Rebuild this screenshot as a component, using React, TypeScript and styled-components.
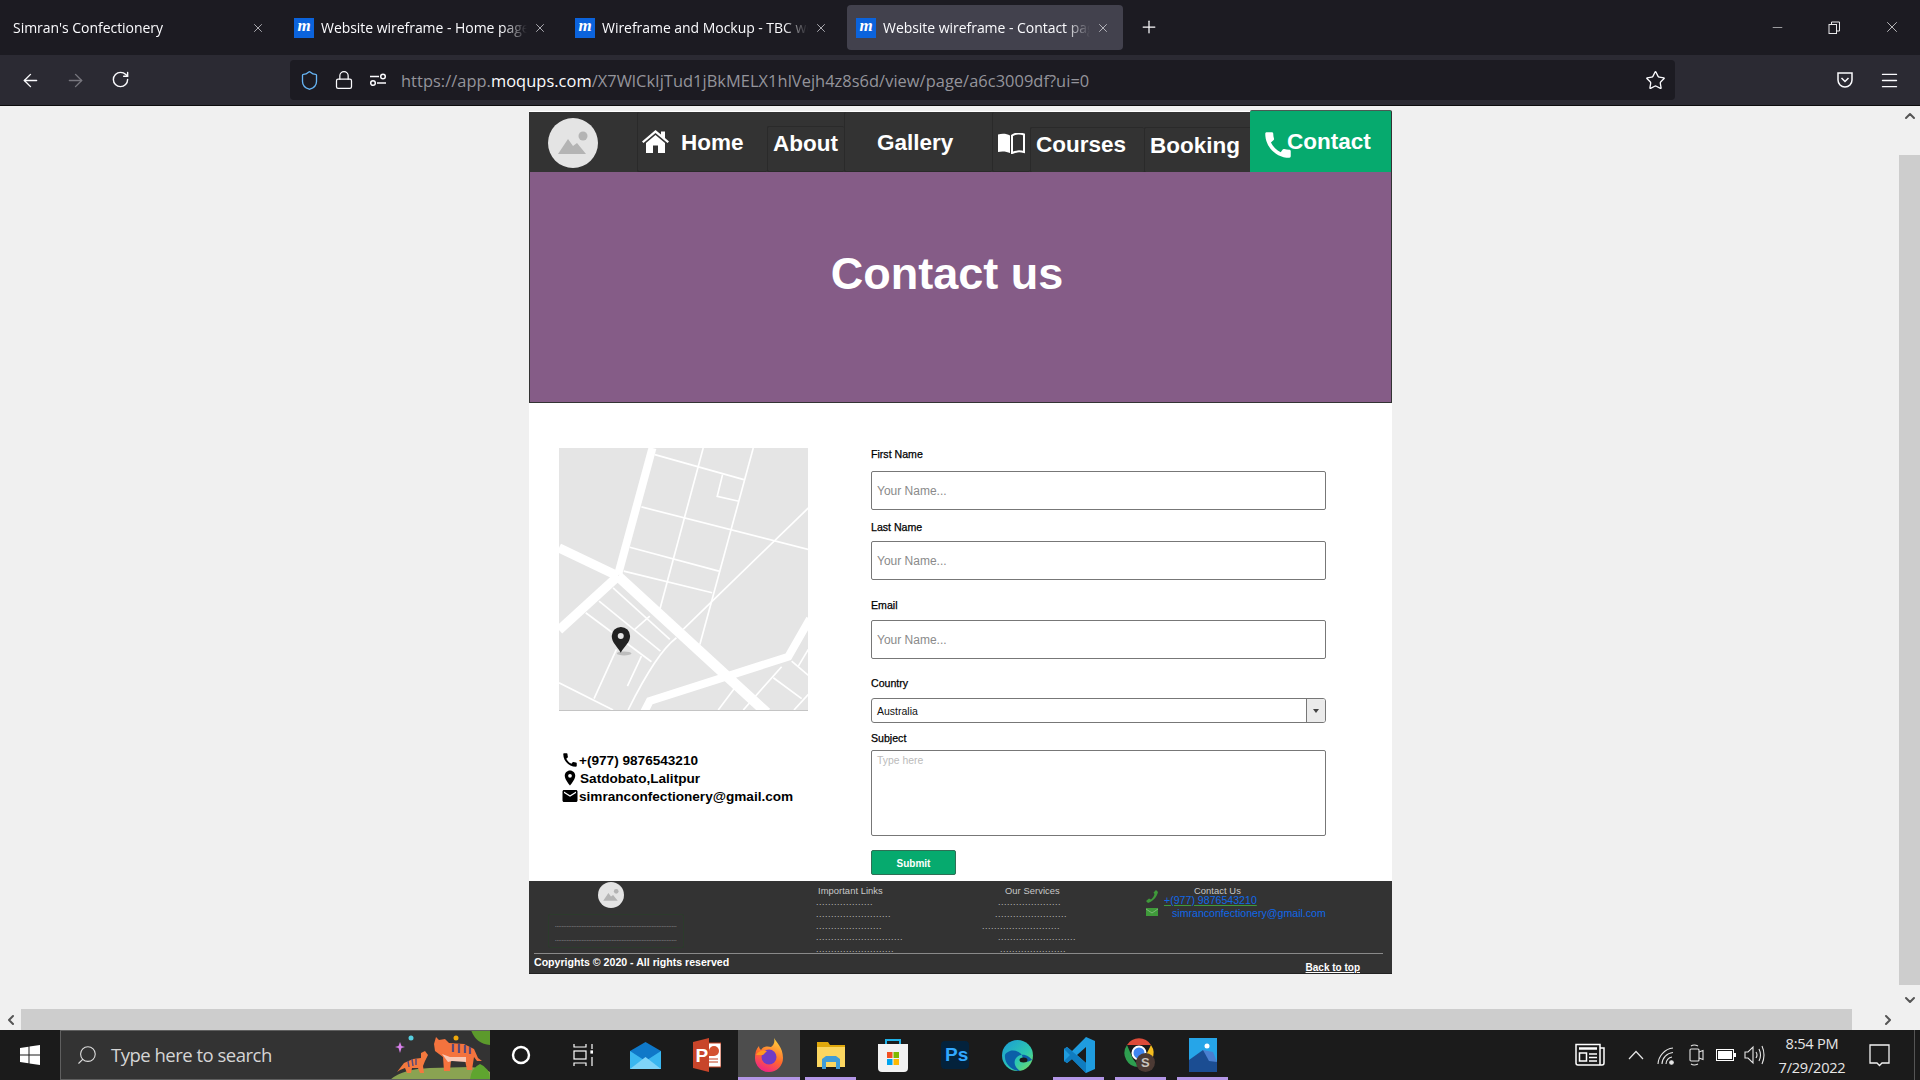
import React from "react";
import styled, { createGlobalStyle } from "styled-components";
import { ArrowLeft, ArrowRight, RotateCw, Lock, Star, Menu, Plus, X, Minus, ChevronUp, ChevronLeft, ChevronRight, ChevronDown, Search, Shield } from "lucide-react";
import { MdCall, MdLocationOn, MdEmail } from "react-icons/md";

const Global = createGlobalStyle`
  html, body { margin: 0; padding: 0; width: 1920px; height: 1080px; overflow: hidden; background: #f0f0f0; }
  * { box-sizing: border-box; }
`;

const Screen = styled.div`
  width: 1920px; height: 1080px; display: flex; flex-direction: column; overflow: hidden;
  font-family: "Liberation Sans", Arial, sans-serif;
`;

/* ---------- browser chrome ---------- */
const TabBar = styled.div`
  height: 55px; flex: none; background: #1c1b22; display: flex; align-items: flex-start; padding-top: 5px;
  font-family: "Open Sans", "Noto Sans", sans-serif; color: #fbfbfe;
`;
const TabStrip = styled.div`display: flex; gap: 7px; margin-left: -2px;`;
const Tab = styled.div<{ $active?: boolean; $pl?: number; $pr?: number }>`
  width: 276px; height: 45px; border-radius: 4px; display: flex; align-items: center; padding: 0 ${p => p.$pr ?? 12}px 0 ${p => p.$pl ?? 13}px;
  background: ${p => (p.$active ? "#42414d" : "transparent")};
`;
const TabFavicon = styled.span`
  width: 20px; height: 20px; flex: none; background: #0b63dc; color: #fff; margin-right: 7px;
  display: flex; align-items: center; justify-content: center;
  font: italic 700 17px/20px "Liberation Serif", serif; padding-bottom: 3px;
`;
const TabTitle = styled.span<{ $plain?: boolean }>`
  flex: 1; white-space: nowrap; overflow: hidden; font-size: 14px; letter-spacing: -0.04px; margin-left: ${p => (p.$plain ? "2px" : "0")};
  mask-image: linear-gradient(to right, #000 88%, transparent 100%);
`;
const TabClose = styled.span`flex: none; width: 14px; height: 14px; display: flex; color: #d8d8dc; margin-left: 6px;`;
const NewTab = styled.span`display: flex; color: #fbfbfe; margin: 12px 0 0 16px;`;
const WindowControls = styled.div`margin-left: auto; display: flex; height: 44px; align-items: center; padding-right: 0; color: #e8e8ea;`;
const WindowButton = styled.span`width: 57px; display: flex; justify-content: center;`;

const Toolbar = styled.div`
  height: 51px; flex: none; background: #2b2a33; border-bottom: 1px solid #0c0c0d; display: flex; align-items: center; color: #fbfbfe;
`;
const NavButton = styled.span<{ $dim?: boolean }>`
  width: 45px; flex: none; display: flex; justify-content: center; color: ${p => (p.$dim ? "#77767e" : "#fbfbfe")};
`;
const NavButtons = styled.div`display: flex; margin-left: 8px; width: 282px;`;
const AddressBar = styled.div`
  width: 1385px; height: 40px; background: #1c1b22; border-radius: 4px; display: flex; align-items: center; padding-left: 3px;
`;
const AddrIcon = styled.span`width: 35px; flex: none; display: flex; justify-content: center; margin-left: -1px;`;
const Url = styled.span`
  font: 16.4px "Open Sans", "Noto Sans", sans-serif; color: #94949b; white-space: nowrap; margin-left: 6px; letter-spacing: 0.05px;
  b { color: #fbfbfe; font-weight: 400; }
`;
const StarSlot = styled.span`margin-left: auto; margin-right: 9px; display: flex;`;
const ToolRight = styled.div`display: flex; margin-left: 158px; gap: 20px; align-items: center;`;
const ToolIcon = styled.span`display: flex; width: 24px; justify-content: center;`;

/* ---------- viewport ---------- */
const Viewport = styled.div`flex: 1; display: flex; min-height: 0; background: #f0f0f0;`;
const PageArea = styled.div`flex: 1; padding: 5px 0 0 529px;`;
const VScroll = styled.div`width: 21px; flex: none; display: flex; flex-direction: column; align-items: center; color: #555;`;
const VThumb = styled.div`width: 21px; height: 832px; background: #cdcdcd; margin: 30px 0 6px;`;
const ArrowSlot = styled.span<{ $mt?: number }>`display: flex; height: 18px; align-items: center; margin-top: ${p => p.$mt ?? 0}px;`;
const HScroll = styled.div`height: 21px; flex: none; background: #f0f0f0; display: flex; align-items: center; color: #555;`;
const HThumb = styled.div`width: 1831px; height: 21px; background: #cdcdcd;`;
const HArrow = styled.span`width: 21px; display: flex; justify-content: center;`;
const HEnd = styled.span`width: 68px; padding-left: 28px; display: flex;`;

/* ---------- the page ---------- */
const Card = styled.div`width: 863px; background: #fff; display: flex; flex-direction: column;`;
const NavBar = styled.nav`
  height: 60px; margin-top: 1px; background: #333; display: flex; color: #fff; font-weight: 700; font-size: 22.5px; line-height: 30px;
`;
const NavCell = styled.div<{ $w: number; $top?: number; $pl?: number; $pt?: number }>`
  width: ${p => p.$w}px; height: ${p => 60 - (p.$top ?? 0) + ((p.$top ?? 0) > 14 ? 1 : 0)}px; margin-top: ${p => p.$top ?? 0}px;
  padding: ${p => p.$pt ?? 16}px 0 0 ${p => p.$pl ?? 0}px; flex: none; display: flex; align-items: flex-start; white-space: nowrap;
  border-left: 1px solid #2a2a2a; border-top: ${p => (p.$top ? "1px solid #2a2a2a" : "0")}; border-bottom: 1px solid #2a2a2a; border-radius: 2px;
`;
const LogoCell = styled.div`width: 108px; flex: none; padding: 6px 0 0 19px;`;
const Logo = styled.svg<{ $size: number }>`width: ${p => p.$size}px; height: ${p => p.$size}px; display: block;`;
const HomeIconSlot = styled.span`display: flex; width: 39px; padding-top: 2px;`;
const BookSlot = styled.span`display: flex; padding-top: 5px;`;
const ContactCell = styled.div`
  width: 142px; height: 62px; margin: -2px 0 0 -9px; flex: none; position: relative; z-index: 1; background: #06aa6e; border-top: 1px solid #4a5a54;
  border-right: 1px solid #333; border-radius: 2px 2px 0 0; display: flex; align-items: flex-start; padding: 16px 0 0 11px;
`;
const CallSlot = styled.span`
  display: flex; flex: none; width: 26px; height: 30px; padding-top: 1px;
  svg { flex: none; }
`;

const Hero = styled.header`
  height: 231px; background: #855c87; border: 1px solid #333; border-top: 0; display: flex; align-items: center; justify-content: center;
  padding: 0 27px 26px 0;
`;
const HeroTitle = styled.h1`margin: 0; color: #fff; font-size: 45px; line-height: 52px; font-weight: 700;`;

const Body = styled.main`height: 478px; display: flex; padding: 45px 0 0 30px; background: #fff;`;
const LeftCol = styled.section`width: 249px; flex: none;`;
const MapFrame = styled.svg`display: block; width: 249px; height: 263px; background: #e5e5e5; border-bottom: 1px solid #c4c4c4;`;
const ContactList = styled.ul`list-style: none; margin: 40px 0 0; padding: 0 0 0 2px;`;
const ContactLine = styled.li<{ $pl: number }>`
  display: flex; align-items: center; height: 18px; font-size: 13.6px; font-weight: 700; color: #000; white-space: nowrap;
  span { display: flex; width: ${p => p.$pl}px; flex: none; }
`;

const FormCol = styled.form`width: 455px; margin-left: 63px; flex: none;`;
const Field = styled.div<{ $top?: number; $gap: number }>`
  margin-top: ${p => p.$top ?? 0}px;
  label {
    display: block; font-size: 10.6px; line-height: 12px; font-weight: 400; color: #000; margin-bottom: ${p => p.$gap}px;
    -webkit-text-stroke: 0.25px #000;
  }
`;
const TextInput = styled.input`
  display: block; width: 455px; height: 39px; border: 1px solid #777; border-radius: 2px; padding: 0 5px; margin: 0;
  font: 12px "Liberation Sans", Arial, sans-serif; background: #fff;
  &::placeholder { color: #8a8a8a; opacity: 1; }
`;
const SelectBox = styled.div`
  width: 455px; height: 25px; border: 1px solid #777; border-radius: 3px; display: flex; align-items: center; padding-left: 5px;
  font-size: 10.5px; color: #111; overflow: hidden;
`;
const SelectValue = styled.span`flex: 1;`;
const SelectArrow = styled.span`
  width: 19px; height: 25px; background: #ebebeb; border-left: 1px solid #777; display: flex; align-items: center; justify-content: center;
  &::after { content: ""; border: 3.5px solid transparent; border-top: 4px solid #444; margin-top: 4px; }
`;
const TextArea = styled.textarea`
  display: block; width: 455px; height: 86px; border: 1px solid #777; border-radius: 2px; padding: 4px 5px; margin: 0; resize: none;
  font: 10.4px "Liberation Sans", Arial, sans-serif; background: #fff;
  &::placeholder { color: #bbb; opacity: 1; }
`;
const SubmitButton = styled.button`
  display: block; width: 85px; height: 25px; margin: 14px 0 0; padding: 1px 0 0; background: #06aa6e; color: #fff; border: 1px solid #2f6f55; border-radius: 2px;
  font: 700 10px "Liberation Sans", Arial, sans-serif;
`;

const Footer = styled.footer`height: 93px; background: #333; border-bottom: 1px solid #222; display: flex; flex-direction: column; color: #c8c8c8;`;
const FooterTop = styled.div`height: 72px; flex: none; display: flex; overflow: hidden; font-size: 9px; line-height: 12px;`;
const Brand = styled.div`width: 287px; flex: none; padding: 1px 0 0 19px;`;
const BrandLogo = styled.div`margin-left: 50px;`;
const DashBox = styled.div`
  width: 136px; height: 34px; margin-top: 6px; border: 1px solid #2c3b2c; border-radius: 2px; padding: 3px 0 0 6px; line-height: 14px;
  color: #d8d8d8; overflow: hidden; white-space: nowrap;
`;
const DashLine = styled.div`height: 14px; font-size: 6px;`;
const FooterCol = styled.div<{ $w: number }>`width: ${p => p.$w}px; flex: none; padding-top: 4px; white-space: nowrap;`;
const ColTitle = styled.div<{ $ml: number }>`margin-left: ${p => p.$ml}px; font-size: 9.4px; height: 12px; letter-spacing: 0.05px;`;
const DotRow = styled.div<{ $ml: number }>`margin-left: ${p => p.$ml}px; height: 11.8px; letter-spacing: 0.5px; color: #bdbdbd; position: relative; top: -1px;`;
const ContactFoot = styled.div`flex: 1; display: flex; padding-top: 4px; white-space: nowrap;`;
const FootIcons = styled.div`width: 23px; flex: none; padding: 5px 0 0 5px; display: flex; flex-direction: column; gap: 5px;`;
const FootLink = styled.a<{ $ml: number; $line?: boolean; $up?: number }>`
  display: block; margin: ${p => p.$up ?? 0}px 0 0 ${p => p.$ml}px; font-size: 10.6px; line-height: 11px; color: #1068e8; text-decoration: ${p => (p.$line ? "underline" : "none")};
  text-decoration-color: #3f9a3a;
`;
const Rule = styled.div`height: 1px; width: 849px; margin-left: 5px; background: #8a8a8a; flex: none;`;
const FooterBottom = styled.div`flex: 1; display: flex; justify-content: space-between; padding: 1px 32px 0 5px; color: #fff; font-weight: 700;`;
const Copyright = styled.span`font-size: 10.6px; line-height: 14px;`;
const BackTop = styled.a`font-size: 10px; line-height: 14px; margin-top: 6px; text-decoration: underline; color: #fff;`;

/* ---------- taskbar ---------- */
const Taskbar = styled.div`height: 50px; flex: none; background: #1b1b1b; display: flex; color: #fff;`;
const StartCell = styled.div`width: 60px; flex: none; display: flex; justify-content: center; align-items: center; padding-right: 0;`;
const SearchBox = styled.div`
  width: 430px; flex: none; background: #333; border: 1px solid #5f5f5f; border-width: 1px 0 1px 1px; display: flex; align-items: center; padding-left: 15px;
  overflow: hidden; position: relative; color: #ddd;
`;
const SearchText = styled.span`font: 18.5px "Open Sans", "Noto Sans", sans-serif; margin: -2px 0 0 13px; letter-spacing: -0.5px; color: #d5d5d5;`;
const TigerArt = styled.svg`margin-left: auto; width: 100px; height: 50px; flex: none;`;
const TaskCell = styled.div<{ $active?: boolean; $open?: boolean }>`
  width: 62px; flex: none; position: relative; display: flex; align-items: center; justify-content: center;
  background: ${p => (p.$active ? "#4d4d4d" : "transparent")};
  &::after {
    content: ""; position: absolute; bottom: 0; left: ${p => (p.$active ? "0" : "5px")}; right: ${p => (p.$active ? "0" : "6px")}; height: 3px;
    background: ${p => (p.$open || p.$active ? "#b396e6" : "transparent")};
  }
`;
const Tray = styled.div`margin: 0 5px 0 auto; display: flex; align-items: center; padding-right: 10px; border-right: 1px solid #555;`;
const TrayIcon = styled.span<{ $w: number; $mr?: number }>`width: ${p => p.$w}px; margin-right: ${p => p.$mr ?? 0}px; display: flex; justify-content: center; flex: none;`;
const Clock = styled.div`
  width: 84px; text-align: center; font: 14.6px/24px "Open Sans", "Noto Sans", sans-serif; color: #e6e6e6; letter-spacing: -0.25px; white-space: nowrap;
`;
const StoreSquares = styled.svg`display: block;`;
const ChromeBadge = styled.text`font: 700 13px "Liberation Sans", Arial, sans-serif; fill: #c9c2be;`;
const TileText = styled.text`font: 700 19px "Liberation Sans", Arial, sans-serif;`;

/* ---------- drawings ---------- */
const PlaceholderLogo = ({ size }: { size: number }) => (
  <Logo $size={size} viewBox="0 0 50 50">
    <circle cx="25" cy="25" r="25" fill="#e4e4e4" />
    <path d="M10 36 L20 21 L25 28 L29 25 L38 36 Z" fill="#b4b4b4" />
    <circle cx="35" cy="18" r="4.5" fill="#b4b4b4" />
  </Logo>
);

const thick = [
  ["M338 55 L235 435", 24],
  ["M58 355 L235 440", 28],
  ["M235 440 L58 602", 28],
  ["M235 440 L680 850", 31],
  ["M810 568 L745 682 L330 815 L312 850", 24],
] as const;
const thin = [
  "M345 75 L612 150", "M490 55 L360 540", "M640 55 L480 645", "M548 135 L532 200 L597 215", "M305 232 L805 360", "M805 235 L430 600",
  "M270 353 L537 425", "M252 425 L517 490", "M220 475 L390 630", "M178 515 L362 665", "M138 550 L335 697", "M330 560 L285 600",
  "M410 625 Q350 670 265 842", "M230 660 L163 808", "M58 760 L220 842", "M305 680 L263 770", "M585 775 L535 842", "M725 712 L610 842",
  "M755 695 L805 738", "M700 745 L785 808", "M805 795 L762 842", "M805 660 L775 710",
];

const MapDrawing = () => (
  <MapFrame viewBox="58 55 746 787" preserveAspectRatio="none">
    {thick.map(([d, w]) => <path key={d} d={d} stroke="#fff" strokeWidth={w} fill="none" />)}
    {thin.map(d => <path key={d} d={d} stroke="#fff" strokeWidth="5" fill="none" />)}
    <ellipse cx="253" cy="672" rx="22" ry="6" fill="#bdbdbd" />
    <path d="M243 670 C232 650 216 640 216 620 A27.500 27.500 0 0 1 271 620 C271 640 254 650 243 670 Z" fill="#222" />
    <circle cx="243" cy="620" r="9" fill="#e5e5e5" />
  </MapFrame>
);

const HomeIcon = () => (
  <svg width="27" height="23" viewBox="0 0 27 23" fill="#fff">
    <path d="M13.500 0 L19 4.500 V1.500 H23 V8 L27 11.500 L25.500 13 L13.500 3 L1.500 13 L0 11.500 Z" />
    <path d="M13.500 5 L23 13 V23 H16 V15.500 H11 V23 H4 V13 Z" />
  </svg>
);
const BookIcon = () => (
  <svg width="28" height="21" viewBox="0 0 28 21">
    <path d="M1 1.500 C5 0 10 0.500 13 2.500 V20 C10 18.500 5 18 1 19 Z" fill="#fff" />
    <path d="M15 2.500 C18 0.500 23 0 27 1.500 V19 C23 18 18 18.500 15 20 Z" fill="#333" stroke="#fff" strokeWidth="2" />
  </svg>
);
const Moq = () => <TabFavicon>m</TabFavicon>;
const CloseX = () => <TabClose><X size={14} strokeWidth={1.3} /></TabClose>;

const RestoreIcon = () => (
  <svg width="13" height="13" viewBox="0 0 13 13" fill="none" stroke="#e8e8ea">
    <rect x="1" y="3.500" width="7.500" height="9" /><path d="M3.500 3.500 V1 H11.500 V10 H8.500" />
  </svg>
);
const SettingsIcon = () => (
  <svg width="18" height="16" viewBox="0 0 18 16" fill="none" stroke="#fbfbfe" strokeWidth="1.500">
    <path d="M1 4.500 H10" /><circle cx="14" cy="4.500" r="2.300" /><path d="M8 11 H17" /><circle cx="4" cy="11" r="2.300" />
  </svg>
);
const PocketIcon = () => (
  <svg width="18" height="18" viewBox="0 0 18 18" fill="none" stroke="#fbfbfe" strokeWidth="1.500">
    <path d="M2 2 H16 V9 A7 7 0 0 1 2 9 Z" /><path d="M5.500 7 L9 10.500 L12.500 7" />
  </svg>
);
const WinLogo = () => (
  <svg width="20" height="20" viewBox="0 0 20 20" fill="#fff">
    <path d="M0 3 L8.500 1.700 V9.500 H0 Z M9.500 1.500 L20 0 V9.500 H9.500 Z M0 10.500 H8.500 V18.300 L0 17 Z M9.500 10.500 H20 V20 L9.500 18.500 Z" />
  </svg>
);
const Tiger = () => (
  <TigerArt viewBox="0 0 100 50">
    <rect width="100" height="50" fill="#333" />
    <path d="M0 50 Q12 39 40 38 L80 37 Q95 38 100 42 V50 Z" fill="#8aa352" />
    <path d="M81 0 L100 0 V15 Q86 14 81 0 Z" fill="#5c9a2c" />
    <path d="M80 50 Q81 38 90 34 Q100 38 100 50 Z" fill="#5fa52f" />
    <circle cx="21" cy="8" r="2.500" fill="#56cfe0" />
    <circle cx="66" cy="8" r="2.500" fill="#f0a90c" />
    <path d="M10 12 L11.500 16 L15 17 L11.500 18 L10 23 L8.500 18 L5 17 L8.500 16 Z" fill="#d880ea" />
    <path d="M44 14 L46 7 L49 10 L55 9 L59 13 L74 14 L84 19 L88 28 L92 31 L87 31 L84 27 L82 40 L77 40 L75 30 L61 30 L60 41 L54 41 L53 27 L49 24 L45 21 Z" fill="#f4733e" />
    <path d="M52 24 L60 27 L76 27 L76 32 L62 31 L58 32 Z" fill="#f8c8b6" />
    <path d="M63 14 L63 22 M69 14 L69 23 M75 15 L75 23 M80 17 L80 24" stroke="#5a4a78" strokeWidth="2.200" />
    <path d="M7 42 L14 33 L23 29 L31 28 L31 23 L35 21 L38 25 L35 31 L33 36 L34 43 L30 43 L28 38 L22 38 L21 43 L17 43 L15 38 L10 40 Z" fill="#f4793e" />
    <path d="M18 31 L19 37 M22 29 L23 36 M26 29 L26 35" stroke="#5a4a78" strokeWidth="1.500" />
  </TigerArt>
);
const MailIcon = () => (
  <svg width="31" height="27" viewBox="0 0 31 27">
    <path d="M0 9 L15.500 0 L31 9 V27 H0 Z" fill="#0f78c8" />
    <path d="M0 9 L15.500 19 L31 9 V27 H0 Z" fill="#3ab7f0" />
    <path d="M0 27 L15.500 15 L31 27 Z" fill="#7fd4f8" />
  </svg>
);
const PptIcon = () => (
  <svg width="28" height="34" viewBox="0 0 28 34">
    <rect x="10" y="5" width="18" height="24" fill="#fff" stroke="#c43e1c" />
    <path d="M16 13 A5 5 0 1 1 21 18 H16 Z" fill="#d35230" />
    <path d="M16 21 H25 M16 24 H25" stroke="#c43e1c" />
    <path d="M0 4 L16 0 V34 L0 30 Z" fill="#c8452a" />
    <TileText x="2.500" y="24" fill="#fff">P</TileText>
  </svg>
);
const FirefoxIcon = () => (
  <svg width="30" height="34" viewBox="0 0 30 34">
    <defs>
      <linearGradient id="ff" x1="0.700" y1="0" x2="0.300" y2="1"><stop offset="0" stopColor="#ffd23c" /><stop offset="0.550" stopColor="#ff6a2b" /><stop offset="1" stopColor="#f0208a" /></linearGradient>
    </defs>
    <path d="M20 0 C22 4 29 9 29 20 A14 14 0 0 1 1 20 C1 15 2 11 5 8 C5 10 6 11 7 12 C9 8 14 8 17 9 C20 7 21 4 20 0 Z" fill="url(#ff)" />
    <circle cx="15" cy="19" r="7.500" fill="#6f3cc4" />
    <path d="M2 17 C5 12 10 12 13 13 L9 17 Z" fill="#ff9a1f" />
  </svg>
);
const FolderIcon = () => (
  <svg width="28" height="28" viewBox="0 0 28 28">
    <path d="M0 1 H11 L13 4 H28 V26 H0 Z" fill="#e0a80c" />
    <rect x="0" y="6" width="28" height="20" fill="#fbd660" />
    <path d="M5 28 V18 L9 15 H19 L23 18 V28 H19 V21 H9 V28 Z" fill="#3f9cd8" />
  </svg>
);
const StoreIcon = () => (
  <StoreSquares width="30" height="33" viewBox="0 0 30 33">
    <path d="M8 6 V1 H22 V6" fill="none" stroke="#20b2e8" strokeWidth="2" />
    <path d="M0 5 H30 V29 A4 4 0 0 1 26 33 H4 A4 4 0 0 1 0 29 Z" fill="#f2f2f2" />
    <rect x="9" y="13" width="5.500" height="6" fill="#f25022" /><rect x="15.500" y="13" width="5.500" height="6" fill="#7fba00" />
    <rect x="9" y="20" width="5.500" height="6" fill="#00a4ef" /><rect x="15.500" y="20" width="5.500" height="6" fill="#ffb900" />
  </StoreSquares>
);
const PsIcon = () => (
  <svg width="28" height="28" viewBox="0 0 28 28">
    <rect width="28" height="28" rx="4" fill="#03223c" />
    <TileText x="4" y="20" fill="#31a8ff">Ps</TileText>
  </svg>
);
const EdgeIcon = () => (
  <svg width="31" height="31" viewBox="0 0 31 31">
    <defs>
      <linearGradient id="ed" x1="0" y1="0" x2="1" y2="1"><stop offset="0" stopColor="#1a9ad8" /><stop offset="0.600" stopColor="#2dc8b0" /><stop offset="1" stopColor="#7fe05a" /></linearGradient>
    </defs>
    <circle cx="15.500" cy="15.500" r="15.500" fill="url(#ed)" />
    <path d="M3 15 C2 24 10 31 18 31 C12 27 11 21 15 17 C20 12 28 16 30 20 C24 23 21 22 20 20 C23 14 14 9 8 11 C5 12 3 14 3 15 Z" fill="#0b5fa8" />
    <ellipse cx="21.500" cy="20" rx="4" ry="2.500" fill="#1b1b1b" />
  </svg>
);
const VsCodeIcon = () => (
  <svg width="31" height="36" viewBox="0 0 31 36">
    <path d="M22 0 L31 4 V32 L22 36 L8 22 L3 26 L0 24 V12 L3 10 L8 14 Z M22 10 L13 18 L22 26 Z" fill="#1f9cdf" fillRule="evenodd" />
    <path d="M0 12 L3 10 L22 26 V36 L8 22 L3 26 L0 24 L6 18 Z" fill="#0f7cc0" />
  </svg>
);
const ChromeIcon = () => (
  <svg width="34" height="34" viewBox="0 0 34 34">
    <path d="M3 7 A14 14 0 0 1 27 7 H15 Z" fill="#dd4b39" />
    <path d="M3 7 L9 21 L15 29 A14 14 0 0 1 3 7 Z" fill="#2e9e4f" />
    <path d="M27 7 A14 14 0 0 1 15 29 L21 19 Z" fill="#f5bd1f" />
    <circle cx="15" cy="15" r="6.500" fill="#3f85f0" stroke="#fff" strokeWidth="2" />
    <circle cx="21.500" cy="24.500" r="9.500" fill="#4c3a34" />
    <ChromeBadge x="17" y="29">S</ChromeBadge>
  </svg>
);
const PhotosIcon = () => (
  <svg width="28" height="34" viewBox="0 0 28 34">
    <rect width="28" height="34" fill="#26a5e8" />
    <circle cx="18" cy="8" r="2.500" fill="#fff" />
    <path d="M0 22 L14 12 L28 24 V34 H0 Z" fill="#1b4d92" />
    <path d="M14 12 L24 14 L28 24 L20 23 Z" fill="#4a7fd0" />
  </svg>
);
const NewsIcon = () => (
  <svg width="30" height="24" viewBox="0 0 30 24" fill="none" stroke="#fff" strokeWidth="1.500">
    <path d="M1 1.500 H25 V22 H3 A2 2 0 0 1 1 20 Z M25 5 H29 V20 A2 2 0 0 1 27 22 H25" />
    <path d="M4 5.500 H22" strokeWidth="2.500" /><rect x="4.500" y="10" width="7" height="8" /><path d="M14 11 H22 M14 14.500 H22 M14 18 H22" />
  </svg>
);
const WifiIcon = () => (
  <svg width="18" height="20" viewBox="0 0 18 20" fill="none" stroke="#e6e6e6" strokeWidth="1.100">
    <path d="M1 19 A17 17 0 0 1 16 3" /><path d="M5 19 A12 12 0 0 1 16 7.500" /><path d="M9 19 A7 7 0 0 1 15 12" /><circle cx="14.500" cy="17.500" r="1.800" fill="#e6e6e6" />
  </svg>
);
const MeetIcon = () => (
  <svg width="15" height="24" viewBox="0 0 15 24" fill="none" stroke="#e6e6e6" strokeWidth="1.100">
    <rect x="1" y="6" width="9" height="12" rx="1" /><path d="M10 9 L14 7.500 V16.500 L10 15" /><path d="M2 3 Q5 1 9 3 M2 21 Q5 23 9 21" />
  </svg>
);
const BatteryIcon = () => (
  <svg width="20" height="12" viewBox="0 0 20 12"><rect x="0.500" y="0.500" width="17" height="11" fill="none" stroke="#fff" /><rect x="2" y="2" width="14" height="8" fill="#fff" /><rect x="18" y="4" width="2" height="4" fill="#fff" /></svg>
);
const SpeakerIcon = () => (
  <svg width="22" height="22" viewBox="0 0 22 22" fill="none" stroke="#e6e6e6" strokeWidth="1.100">
    <path d="M1 8 H4 L9 3 V19 L4 14 H1 Z" /><path d="M12 8 Q14 11 12 14 M15 5 Q18 11 15 17 M18 2 Q22 11 18 20" />
  </svg>
);
const TrayChevron = () => (
  <svg width="16" height="10" viewBox="0 0 16 10" fill="none" stroke="#e6e6e6" strokeWidth="1.200"><path d="M1 9 L8 1.500 L15 9" /></svg>
);
const Notify = () => (
  <svg width="21" height="23" viewBox="0 0 21 23" fill="none" stroke="#f2f2f2" strokeWidth="1.300"><path d="M1 1 H20 V19 H13 L10.500 21.500 L8 19 H1 Z" /></svg>
);
const FootPhone = () => (
  <svg width="12" height="13" viewBox="0 0 12 13"><path d="M10 0 L12 2 C11 7 7 11 2 13 L0 11 L3 8.500 L5 9.500 C7 8 8 6 8.500 4 L7.500 2.500 Z" fill="#3f9a3a" /></svg>
);
const FootMail = () => (
  <svg width="12" height="8" viewBox="0 0 12 8"><rect width="12" height="8" fill="#3f9a3a" /><path d="M0 1 L6 5 L12 1" fill="none" stroke="#8ac087" strokeWidth="0.800" /></svg>
);

const dotsOf = (n: number) => ".".repeat(n);
const linkDots = [[0, 19], [0, 25], [0, 22], [0, 29], [0, 26]];
const serviceDots = [[17, 21], [14, 24], [1, 26], [17, 26], [19, 22]];

export default function App() {
  return (
    <Screen>
      <Global />
      <TabBar>
        <TabStrip>
          <Tab $pr={9}><TabTitle $plain>Simran's Confectionery</TabTitle><CloseX /></Tab>
          <Tab $pr={10}><Moq /><TabTitle>Website wireframe - Home page</TabTitle><CloseX /></Tab>
          <Tab $pl={11} $pr={12}><Moq /><TabTitle>Wireframe and Mockup - TBC website</TabTitle><CloseX /></Tab>
          <Tab $active $pl={9} $pr={13}><Moq /><TabTitle>Website wireframe - Contact page</TabTitle><CloseX /></Tab>
        </TabStrip>
        <NewTab><Plus size={20} strokeWidth={1.5} /></NewTab>
        <WindowControls>
          <WindowButton><Minus size={15} strokeWidth={1} /></WindowButton>
          <WindowButton><RestoreIcon /></WindowButton>
          <WindowButton><X size={18} strokeWidth={1} /></WindowButton>
        </WindowControls>
      </TabBar>
      <Toolbar>
        <NavButtons>
          <NavButton><ArrowLeft size={21} strokeWidth={1.6} /></NavButton>
          <NavButton $dim><ArrowRight size={21} strokeWidth={1.6} /></NavButton>
          <NavButton><RotateCw size={19} strokeWidth={1.8} /></NavButton>
        </NavButtons>
        <AddressBar>
          <AddrIcon><Shield size={21} strokeWidth={1.5} color="#66b5f5" /></AddrIcon>
          <AddrIcon><Lock size={20} strokeWidth={1.5} color="#fbfbfe" /></AddrIcon>
          <AddrIcon><SettingsIcon /></AddrIcon>
          <Url>https://app.<b>moqups.com</b>/X7WlCkIjTud1jBkMELX1hlVejh4z8s6d/view/page/a6c3009df?ui=0</Url>
          <StarSlot><Star size={21} strokeWidth={1.5} /></StarSlot>
        </AddressBar>
        <ToolRight>
          <ToolIcon><PocketIcon /></ToolIcon>
          <ToolIcon><Menu size={21} strokeWidth={1.6} /></ToolIcon>
        </ToolRight>
      </Toolbar>

      <Viewport>
        <PageArea>
          <Card>
            <NavBar>
              <LogoCell><PlaceholderLogo size={50} /></LogoCell>
              <NavCell $w={130} $pl={4} $pt={16}><HomeIconSlot><HomeIcon /></HomeIconSlot>Home</NavCell>
              <NavCell $w={77} $top={14} $pl={5} $pt={2}>About</NavCell>
              <NavCell $w={148} $pl={32} $pt={16}>Gallery</NavCell>
              <NavCell $w={38} $pl={4} $pt={16}><BookSlot><BookIcon /></BookSlot></NavCell>
              <NavCell $w={114} $top={15} $pl={5} $pt={2}>Courses</NavCell>
              <NavCell $w={115} $top={15} $pl={5} $pt={3}>Booking</NavCell>
              <ContactCell><CallSlot><MdCall size={34} /></CallSlot>Contact</ContactCell>
            </NavBar>
            <Hero><HeroTitle>Contact us</HeroTitle></Hero>
            <Body>
              <LeftCol>
                <MapDrawing />
                <ContactList>
                  <ContactLine $pl={18}><span><MdCall size={18} /></span>+(977) 9876543210</ContactLine>
                  <ContactLine $pl={19}><span><MdLocationOn size={18} /></span>Satdobato,Lalitpur</ContactLine>
                  <ContactLine $pl={18}><span><MdEmail size={18} /></span>simranconfectionery@gmail.com</ContactLine>
                </ContactList>
              </LeftCol>
              <FormCol>
                <Field $gap={11}><label>First Name</label><TextInput placeholder="Your Name..." /></Field>
                <Field $top={11} $gap={8}><label>Last Name</label><TextInput placeholder="Your Name..." /></Field>
                <Field $top={19} $gap={9}><label>Email</label><TextInput placeholder="Your Name..." /></Field>
                <Field $top={18} $gap={9}><label>Country</label><SelectBox><SelectValue>Australia</SelectValue><SelectArrow /></SelectBox></Field>
                <Field $top={9} $gap={6}><label>Subject</label><TextArea placeholder="Type here" /></Field>
                <SubmitButton type="button">Submit</SubmitButton>
              </FormCol>
            </Body>
            <Footer>
              <FooterTop>
                <Brand>
                  <BrandLogo><PlaceholderLogo size={26} /></BrandLogo>
                  <DashBox><DashLine>{dotsOf(73)}</DashLine><DashLine>{dotsOf(73)}</DashLine></DashBox>
                </Brand>
                <FooterCol $w={165}>
                  <ColTitle $ml={2}>Important Links</ColTitle>
                  {linkDots.map(([ml, n], i) => <DotRow key={i} $ml={ml}>{dotsOf(n)}</DotRow>)}
                </FooterCol>
                <FooterCol $w={160}>
                  <ColTitle $ml={24}>Our Services</ColTitle>
                  {serviceDots.map(([ml, n], i) => <DotRow key={i} $ml={ml}>{dotsOf(n)}</DotRow>)}
                </FooterCol>
                <ContactFoot>
                  <FootIcons><FootPhone /><FootMail /></FootIcons>
                  <div>
                    <ColTitle $ml={30}>Contact Us</ColTitle>
                    <FootLink $ml={0} $line $up={-2}>+(977) 9876543210</FootLink>
                    <FootLink $ml={8} $up={2}>simranconfectionery@gmail.com</FootLink>
                  </div>
                </ContactFoot>
              </FooterTop>
              <Rule />
              <FooterBottom>
                <Copyright>Copyrights © 2020 - All rights reserved</Copyright>
                <BackTop>Back to top</BackTop>
              </FooterBottom>
            </Footer>
          </Card>
        </PageArea>
        <VScroll>
          <ArrowSlot $mt={1}><ChevronUp size={16} strokeWidth={3} /></ArrowSlot>
          <VThumb />
          <ArrowSlot><ChevronDown size={16} strokeWidth={3} /></ArrowSlot>
        </VScroll>
      </Viewport>
      <HScroll>
        <HArrow><ChevronLeft size={16} strokeWidth={3} /></HArrow>
        <HThumb />
        <HEnd><ChevronRight size={16} strokeWidth={3} /></HEnd>
      </HScroll>

      <Taskbar>
        <StartCell><WinLogo /></StartCell>
        <SearchBox>
          <Search size={22} strokeWidth={1.2} transform="scale(-1,1)" />
          <SearchText>Type here to search</SearchText>
          <Tiger />
        </SearchBox>
        <TaskCell><svg width="20" height="20" viewBox="0 0 20 20" fill="none" stroke="#fff" strokeWidth="2.400"><circle cx="10" cy="10" r="8" /></svg></TaskCell>
        <TaskCell><svg width="20" height="24" viewBox="0 0 20 24" fill="none" stroke="#fff" strokeWidth="1.200"><path d="M1 1 V4 H13 V1 M1 23 V20 H13 V23" /><rect x="1" y="8" width="12" height="8" /><path d="M19 1 V6 M19 14 V23" /><rect x="18" y="8" width="2" height="2" fill="#fff" /></svg></TaskCell>
        <TaskCell><MailIcon /></TaskCell>
        <TaskCell><PptIcon /></TaskCell>
        <TaskCell $active><FirefoxIcon /></TaskCell>
        <TaskCell $open><FolderIcon /></TaskCell>
        <TaskCell><StoreIcon /></TaskCell>
        <TaskCell><PsIcon /></TaskCell>
        <TaskCell><EdgeIcon /></TaskCell>
        <TaskCell $open><VsCodeIcon /></TaskCell>
        <TaskCell $open><ChromeIcon /></TaskCell>
        <TaskCell $open><PhotosIcon /></TaskCell>
        <Tray>
          <TrayIcon $w={30} $mr={15}><NewsIcon /></TrayIcon>
          <TrayIcon $w={31}><TrayChevron /></TrayIcon>
          <TrayIcon $w={30}><WifiIcon /></TrayIcon>
          <TrayIcon $w={30}><MeetIcon /></TrayIcon>
          <TrayIcon $w={29}><BatteryIcon /></TrayIcon>
          <TrayIcon $w={30}><SpeakerIcon /></TrayIcon>
          <Clock>8:54 PM<br />7/29/2022</Clock>
          <TrayIcon $w={50}><Notify /></TrayIcon>
        </Tray>
      </Taskbar>
    </Screen>
  );
}
